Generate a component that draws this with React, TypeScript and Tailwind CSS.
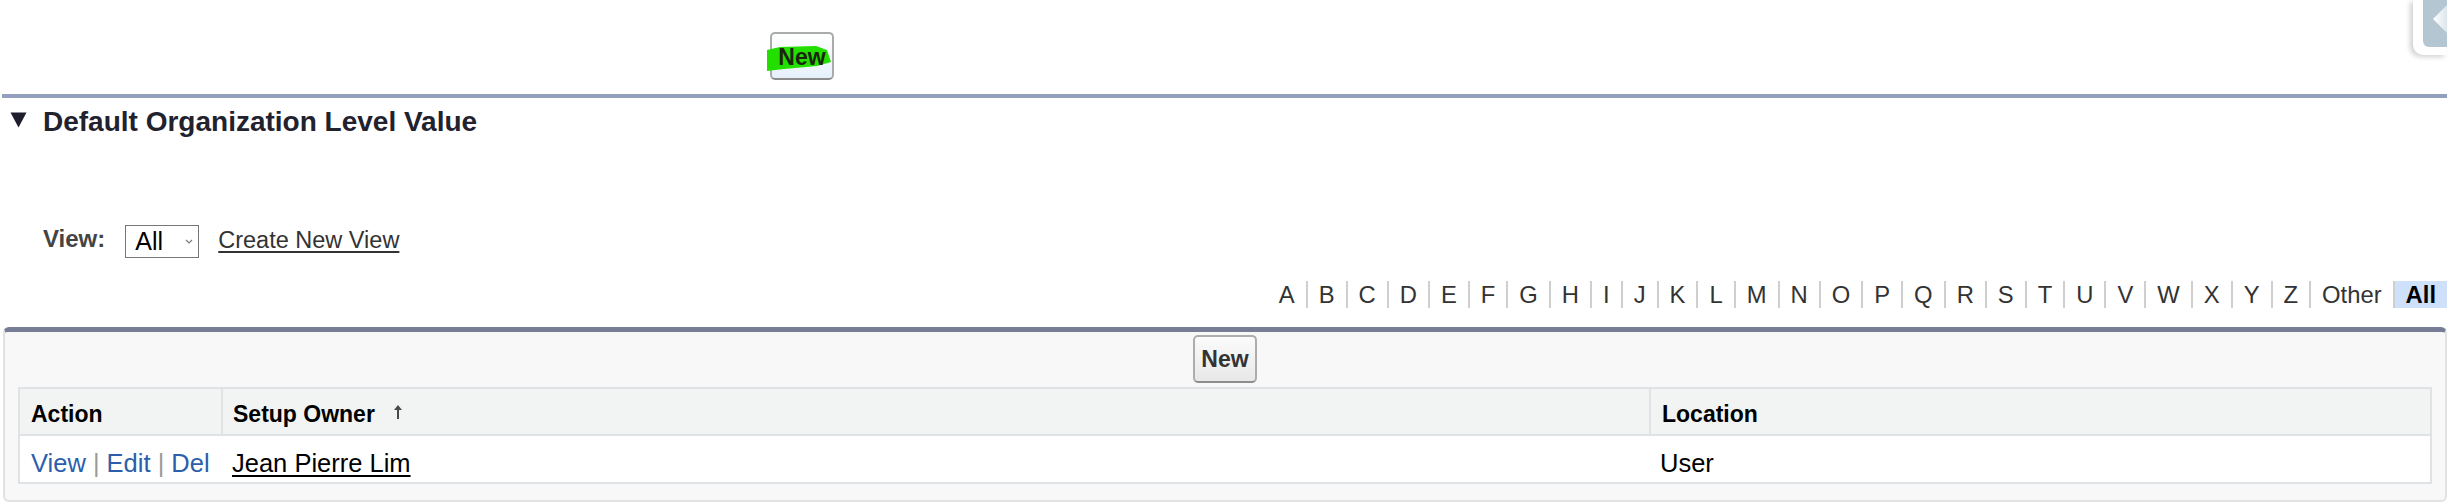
import React from "react";

const letters = [
  "A", "B", "C", "D", "E", "F", "G", "H", "I", "J", "K", "L", "M",
  "N", "O", "P", "Q", "R", "S", "T", "U", "V", "W", "X", "Y", "Z", "Other",
];

function SortArrow() {
  return (
    <svg viewBox="0 0 10 16" className="ml-[18px] mt-[4px] h-[16px] w-[10px]">
      <path d="M5 1 L1 6 L4 6 L4 15 L6 15 L6 6 L9 6 Z" fill="#4a4a4a" />
    </svg>
  );
}

function SidebarHandle() {
  return (
    <div className="absolute right-0 top-0 h-[55px] w-[34px] rounded-bl-[10px] bg-white shadow-[-3px_2px_5px_rgba(0,0,0,0.18)]">
      <div className="absolute right-0 top-0 h-[47px] w-[24px] overflow-hidden rounded-bl-[6px] bg-[#b4c6d1]">
        <svg viewBox="0 0 24 47" className="h-[47px] w-[24px]">
          <defs>
            <linearGradient id="tri" x1="0" x2="1" y1="0" y2="0">
              <stop offset="0" stopColor="#ffffff" />
              <stop offset="1" stopColor="#dde6ec" />
            </linearGradient>
          </defs>
          <polygon points="10,19 24,5 24,33" fill="url(#tri)" />
        </svg>
      </div>
    </div>
  );
}

export default function App() {
  return (
    <div className="h-[504px] w-[2457px] overflow-hidden bg-white font-['Liberation_Sans',Arial,sans-serif]">
      <div className="relative ml-[2px] w-[2445px]">
        <SidebarHandle />

        {/* top button bar */}
        <div className="flex h-[94px] items-start pl-[768px] pt-[32px]">
          <button className="relative flex h-[48px] w-[64px] items-center justify-center rounded-[5px] border-2 border-[#ababab] border-b-[#8c8c8c] bg-gradient-to-b from-[#ffffff] to-[#e6f0fb]">
            <svg viewBox="0 0 66 28" className="absolute left-[-6px] top-[10px] h-[28px] w-[66px]">
              <path
                d="M1 6 L14 3 L50 2 L61 6 L65 18 L51 22 L18 25 L1 27 Z"
                fill="#22df00"
              />
            </svg>
            <span className="relative mt-[2px] text-[23px] font-bold leading-[28px] text-[#1a2410]">New</span>
          </button>
        </div>

        <div className="h-[4px] bg-[#929fbd]" />

        {/* section heading */}
        <div className="mt-[8px] flex items-start">
          <svg viewBox="0 0 17 16" className="ml-[8px] mt-[6px] h-[16px] w-[17px]">
            <polygon points="0.5,0.5 16.5,0.5 8.5,15.5" fill="#1d1d2e" />
          </svg>
          <h2 className="ml-[16px] text-[28px] font-bold leading-[32px] text-[#22222e]">
            Default Organization Level Value
          </h2>
        </div>

        {/* view selector */}
        <div className="mt-[87px] flex h-[33px] items-center pl-[41px]">
          <span className="mb-[5px] text-[24px] font-bold leading-[28px] text-[#444]">View:</span>
          <div className="ml-[20px] flex h-[33px] w-[74px] items-center border border-[#767676] bg-white">
            <span className="pl-[9px] text-[25px] leading-[31px] text-black">All</span>
            <svg viewBox="0 0 8 5" className="ml-auto mr-[5px] h-[5px] w-[8px]">
              <path d="M1 1 L4 4 L7 1" fill="none" stroke="#777" strokeWidth="1.1" />
            </svg>
          </div>
          <a className="mb-[4px] ml-[19px] text-[23.5px] leading-[28px] text-[#333] underline decoration-[1.5px] underline-offset-[3px]">
            Create New View
          </a>
        </div>

        {/* alphabet filter */}
        <div className="mt-[23px] flex h-[27px] justify-end">
          {letters.map((l, i) => (
            <span
              key={l}
              className={
                i === 0
                  ? "px-[11px] text-[23.8px] leading-[27px] text-[#333]"
                  : "border-l-2 border-[#cfcfcf] px-[11px] text-[23.8px] leading-[27px] text-[#333]"
              }
            >
              {l}
            </span>
          ))}
          <span className="border-l-2 border-[#cfcfcf] bg-[#cfe0fa] px-[11px] text-[23.8px] font-bold leading-[27px] text-black">
            All
          </span>
        </div>

        {/* list box */}
        <div className="ml-[1px] mt-[19px] flex h-[175px] w-[2444px] flex-col rounded-[6px] border-x-2 border-b-2 border-t-[5px] border-[#e2e2e2] border-t-[#777d94] bg-[#f8f8f8]">
          <button className="mt-[3px] flex h-[48px] w-[64px] items-center justify-center self-center rounded-[5px] border-2 border-[#adadad] border-b-[#8e8e8e] bg-gradient-to-b from-[#fbfbfb] to-[#e8e8e8]">
            <span className="text-[23px] font-bold leading-[28px] text-[#333]">New</span>
          </button>

          <div className="mx-[13px] mt-[4px] grid grid-cols-[201px_1428px_1fr] border-2 border-[#e0e3e5] bg-white">
            <div className="h-[47px] border-b-2 border-[#e0e3e5] bg-[#f2f3f3] pl-[11px] pt-[11px] text-[23px] font-bold leading-[28px] text-black">
              Action
            </div>
            <div className="flex h-[47px] items-start border-b-2 border-l-2 border-[#e0e3e5] bg-[#f2f3f3] pl-[10px] pt-[11px] text-[23px] font-bold leading-[28px] text-black">
              <span>Setup Owner</span>
              <SortArrow />
            </div>
            <div className="h-[47px] border-b-2 border-l-2 border-[#e0e3e5] bg-[#f2f3f3] pl-[11px] pt-[11px] text-[23px] font-bold leading-[28px] text-black">
              Location
            </div>

            <div className="h-[46px] pl-[11px] pt-[12px] text-[25.5px] leading-[30px]">
              <a className="text-[#2c5eab]">View</a>
              <span className="text-[#9a9a9a]"> | </span>
              <a className="text-[#2c5eab]">Edit</a>
              <span className="text-[#9a9a9a]"> | </span>
              <a className="text-[#2c5eab]">Del</a>
            </div>
            <div className="h-[46px] pl-[11px] pt-[12px] text-[25.5px] leading-[30px]">
              <a className="text-black underline decoration-[1.5px] underline-offset-[3px]">Jean Pierre Lim</a>
            </div>
            <div className="h-[46px] pl-[11px] pt-[12px] text-[25.5px] leading-[30px] text-black">User</div>
          </div>
        </div>
      </div>
    </div>
  );
}
